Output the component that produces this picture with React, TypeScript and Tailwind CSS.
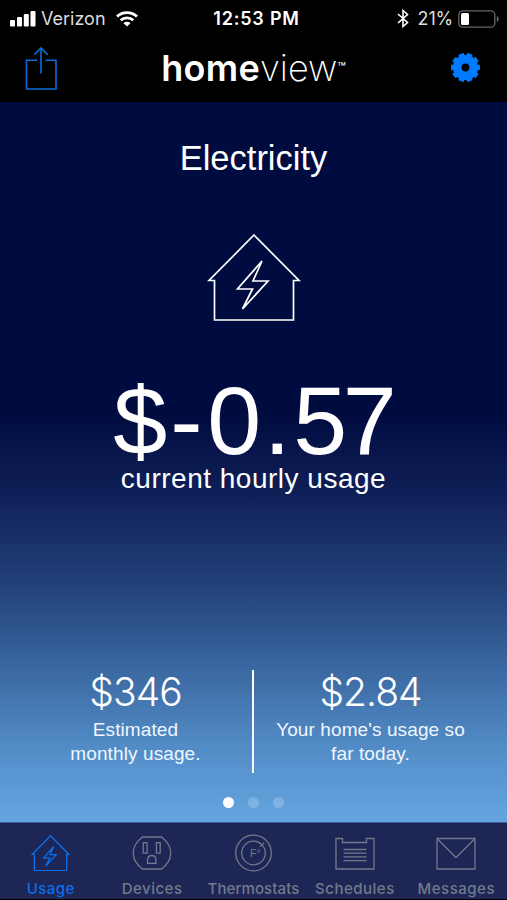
import type { ReactNode } from 'react';

interface Tab {
  label: string;
  icon: ReactNode;
  spacing: string;
}

interface StatProps {
  value: string;
  lines: string[];
  className: string;
}

function HouseIcon({ className, strokeWidth }: { className: string; strokeWidth: number }) {
  return (
    <svg viewBox="0 0 94 88" className={className} fill="none" stroke="currentColor" strokeWidth={strokeWidth}>
      <path d="M47 2 L92 47.5 H86.5 V87 H7.5 V47.5 H2 Z" />
      <path d="M55 28 L30.5 56 H45.5 L35.5 76 L61 48 H46 Z" />
    </svg>
  );
}

function SignalIcon() {
  return (
    <svg viewBox="0 0 26 16" className="h-4 w-[26px]" fill="white">
      <rect x="0" y="9" width="5" height="6.5" rx="1" />
      <rect x="7" y="6" width="5" height="9.5" rx="1" />
      <rect x="13.8" y="3" width="5" height="12.5" rx="1" />
      <rect x="20.5" y="0" width="5" height="15.5" rx="1" />
    </svg>
  );
}

function WifiIcon() {
  return (
    <svg viewBox="0 0 22 16" className="h-4 w-[22px]" fill="none" stroke="white" strokeWidth="2.8">
      <path d="M1 5.6 C6.5 0.2 15.5 0.2 21 5.6" />
      <path d="M4.7 9.3 C8.2 6 13.8 6 17.3 9.3" />
      <path d="M7.4 12 C9.5 10.2 12.5 10.2 14.6 12 L11 15.6 Z" fill="white" stroke="none" />
    </svg>
  );
}

function BluetoothIcon() {
  return (
    <svg viewBox="0 0 12 19" className="h-[19px] w-3" fill="none" stroke="white" strokeWidth="1.6">
      <path d="M1 5 L10.5 13.5 L6 17.5 V1.5 L10.5 5.5 L1 14" />
    </svg>
  );
}

function BatteryIcon() {
  return (
    <svg viewBox="0 0 42 18" className="h-[18px] w-[42px]" fill="none">
      <rect x="0.8" y="0.8" width="36" height="16.4" rx="4" stroke="#666666" strokeWidth="1.3" />
      <rect x="3" y="3" width="8" height="12" rx="1.5" fill="white" />
      <path d="M38.8 6 C41.4 7 41.4 11 38.8 12 Z" fill="#666666" />
    </svg>
  );
}

function ShareIcon() {
  return (
    <svg viewBox="0 0 32 44" className="h-11 w-8" fill="none" stroke="#0a6ed8" strokeWidth="1.6">
      <path d="M12 14.3 H1.5 V43 H31 V14.3 H20.5" />
      <path d="M16 27.5 V2 M9.3 8.8 L16 2 L22.7 8.8" />
    </svg>
  );
}

function GearIcon() {
  return (
    <svg viewBox="-15.5 -14.5 30 30" className="size-[30px]">
      <circle r="8.3" fill="none" stroke="#007aff" strokeWidth="8.8" />
      <circle
        r="13"
        fill="none"
        stroke="#007aff"
        strokeWidth="3"
        pathLength="80"
        strokeDasharray="5.2 2.8"
        transform="rotate(-11.7)"
      />
    </svg>
  );
}

function OutletIcon() {
  return (
    <svg viewBox="0 0 40 36" className="h-9 w-10" fill="none" stroke="currentColor" strokeWidth="1.3">
      <path d="M10.5 2 H29.5 C41.8 11 41.8 25 29.5 34 H10.5 C-1.8 25 -1.8 11 10.5 2 Z" />
      <rect x="11.3" y="7.7" width="3.8" height="10.4" />
      <rect x="24.4" y="7.7" width="3.8" height="10.4" />
      <path d="M15.6 28.3 V25 C15.6 19 24 19 24 25 V28.3 Z" />
    </svg>
  );
}

function ThermostatIcon() {
  return (
    <svg viewBox="0 0 38 38" className="size-[38px]" fill="none" stroke="currentColor" strokeWidth="1.3">
      <circle cx="19.5" cy="19" r="17.8" />
      <circle cx="19.5" cy="19" r="11.8" />
      <path d="M26 12.6 L30 8.8" />
      <text x="16" y="22.8" fontSize="10.5" fontFamily="Liberation Sans, sans-serif" fill="currentColor" stroke="none">
        F°
      </text>
    </svg>
  );
}

function ScheduleIcon() {
  return (
    <svg viewBox="0 0 40 34" className="h-[34px] w-10" fill="none" stroke="currentColor" strokeWidth="1.3">
      <path d="M1 2.5 H7.5 V6.5 H31.5 V2.5 H39 V33 H1 Z" />
      <path d="M8.5 13.5 H31.5 M8.5 17.2 H31.5 M8.5 20.9 H31.5 M8.5 24.6 H31.5" />
    </svg>
  );
}

function EnvelopeIcon() {
  return (
    <svg viewBox="0 0 40 34" className="h-[34px] w-10" fill="none" stroke="currentColor" strokeWidth="1.3">
      <path d="M1 2.5 H39 V33 H1 Z" />
      <path d="M1 2.5 L20 21.5 L39 2.5" />
    </svg>
  );
}

const tabs: Tab[] = [
  { label: 'Usage', icon: <HouseIcon className="h-9 w-[39px]" strokeWidth={3.2} />, spacing: 'tracking-[0.4px]' },
  { label: 'Devices', icon: <OutletIcon />, spacing: 'tracking-[0.5px]' },
  { label: 'Thermostats', icon: <ThermostatIcon />, spacing: 'tracking-[0.1px]' },
  { label: 'Schedules', icon: <ScheduleIcon />, spacing: 'tracking-[0.5px]' },
  { label: 'Messages', icon: <EnvelopeIcon />, spacing: 'tracking-[0.5px]' },
];

function Stat({ value, lines, className }: StatProps) {
  return (
    <div className={`text-center ${className}`}>
      <div className="font-['Inter'] text-[39px] font-light leading-[44px] tracking-[-1px]">{value}</div>
      <div className="mt-1 text-[19px] leading-6 tracking-[0.1px] text-[#eff6ff]">
        {lines.map((line) => (
          <div key={line}>{line}</div>
        ))}
      </div>
    </div>
  );
}

export default function App() {
  return (
    <div className="flex h-[900px] w-[507px] flex-col overflow-hidden bg-black font-['Liberation_Sans',sans-serif] text-white">
      <div className="grid h-9 grid-cols-3 items-center pl-[10px] pr-[7px] pt-px font-['Inter',sans-serif] text-lg">
        <div className="flex items-center gap-[5px]">
          <SignalIcon />
          <span className="text-[#dddddd]">Verizon</span>
          <span className="ml-[5px]">
            <WifiIcon />
          </span>
        </div>
        <div className="whitespace-nowrap pl-[3px] text-center font-semibold tracking-[0.8px]">12:53 PM</div>
        <div className="flex items-center justify-end">
          <BluetoothIcon />
          <span className="ml-[9px] mr-[5px] tracking-[-0.2px] text-[#dddddd]">21%</span>
          <BatteryIcon />
        </div>
      </div>

      <header className="flex h-[66px] items-center justify-between pb-[3px] pl-[25px] pr-[27px]">
        <button className="flex">
          <ShareIcon />
        </button>
        <h1 className="flex font-['Inter',sans-serif] text-[36px] leading-none">
          <span className="font-semibold tracking-[0.3px]">home</span>
          <span className="font-extralight">view</span>
          <span className="text-[14px] leading-[35px]">™</span>
        </h1>
        <button className="flex">
          <GearIcon />
        </button>
      </header>

      <main className="flex h-[720px] flex-col items-center bg-[linear-gradient(to_bottom,#000b3f_0%,#000b3f_43%,#102159_55%,#26477f_69%,#4476b0_83%,#5590cb_91%,#65a5df_100%)]">
        <h2 className="mt-9 text-[34.5px] leading-10">Electricity</h2>
        <HouseIcon className="mt-[55px] h-[88px] w-[94px]" strokeWidth={1.7} />
        <div className="mt-[57px] pl-[3px] text-[97px] leading-[85px]">
          <span className="tracking-[3px]">$</span>
          <span className="tracking-[4.7px]">-</span>
          <span className="tracking-[2.5px]">0.</span>
          <span className="tracking-[-4.5px]">5</span>
          <span>7</span>
        </div>
        <div className="text-[28px] leading-8 tracking-[0.5px]">current hourly usage</div>
        <div className="mt-[175px] flex w-full">
          <Stat value="$346" lines={['Estimated', 'monthly usage.']} className="w-[252px] pl-[19px]" />
          <div className="h-[103px] w-0.5 bg-white" />
          <Stat value="$2.84" lines={["Your home's usage so", 'far today.']} className="w-[253px] pr-[20px]" />
        </div>
        <div className="mt-6 flex gap-[14px]">
          <span className="size-[11px] rounded-full bg-white" />
          <span className="size-[11px] rounded-full bg-white/20" />
          <span className="size-[11px] rounded-full bg-white/20" />
        </div>
      </main>

      <nav className="grid h-[77px] grid-cols-5 border-t border-[#3c5c96] bg-[#1e2655] font-['Inter',sans-serif]">
        {tabs.map((tab, index) => (
          <button
            key={tab.label}
            className={`flex flex-col items-center pt-[9px] ${index === 0 ? 'text-[#0a6fe8]' : 'text-[#73798a]'}`}
          >
            <span className="flex h-[42px] items-center">{tab.icon}</span>
            <span className={`mt-[5px] text-[15px] font-medium leading-5 ${tab.spacing}`}>{tab.label}</span>
          </button>
        ))}
      </nav>
    </div>
  );
}
